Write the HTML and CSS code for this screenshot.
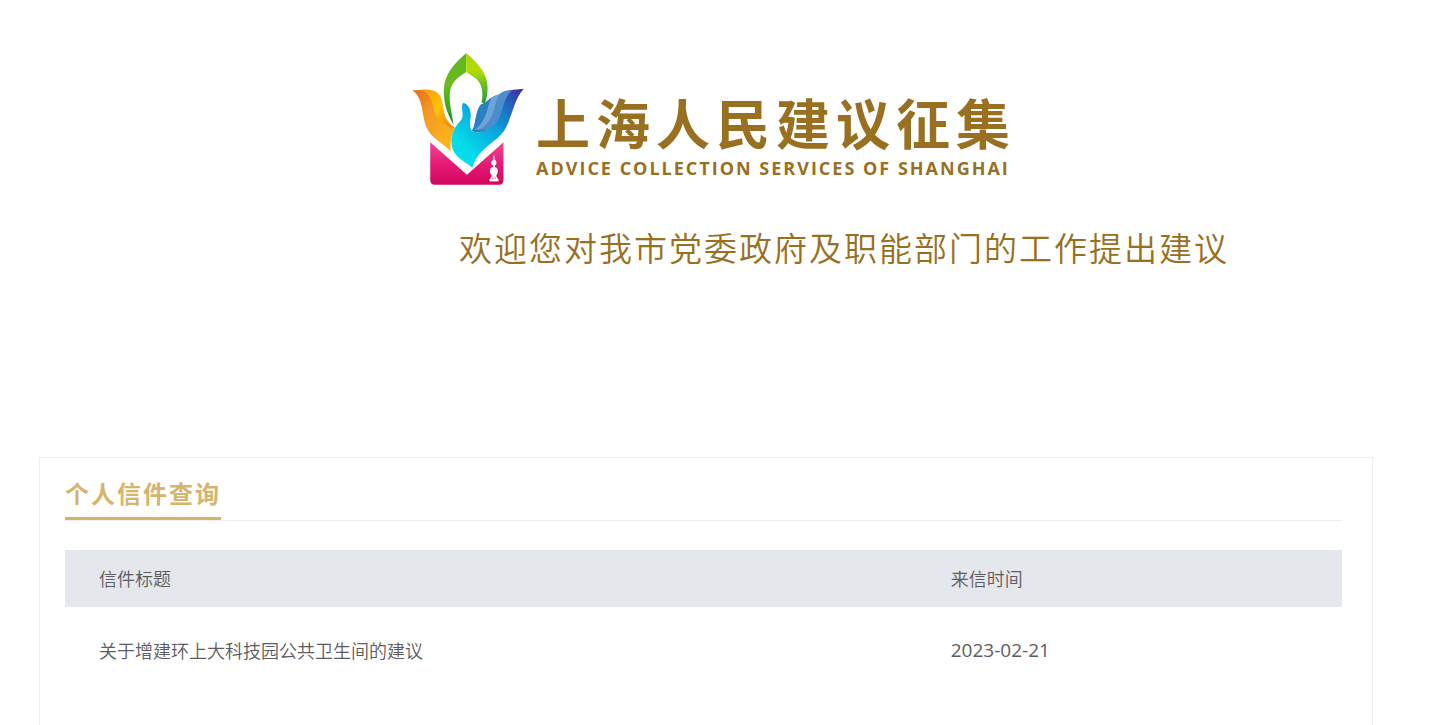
FILE: index.html
```html
<!DOCTYPE html>
<html lang="zh-CN">
<head>
<meta charset="utf-8">
<meta name="viewport" content="width=device-width, initial-scale=1">
<title>上海人民建议征集</title>
<link rel="stylesheet" href="styles.css">
</head>
<body>
<header class="banner">
  <div class="brand">
    <svg class="brand-logo" viewBox="36 38 338 398" preserveAspectRatio="none" aria-hidden="true">
      <defs>
        <linearGradient id="leaf" x1="0" y1="0" x2="0" y2="1"><stop offset="0" stop-color="#5fb421"/><stop offset=".45" stop-color="#6bbb1c"/><stop offset="1" stop-color="#159535"/></linearGradient>
        <linearGradient id="leafLight" x1="0" y1="0" x2="0" y2="1"><stop offset="0" stop-color="#a9d400"/><stop offset=".35" stop-color="#b4dc00"/><stop offset=".65" stop-color="#61bd22"/><stop offset="1" stop-color="#23983b"/></linearGradient>
        <linearGradient id="orange" x1="0" y1="0" x2=".8" y2="1"><stop offset="0" stop-color="#e66a15"/><stop offset=".4" stop-color="#f49a24"/><stop offset="1" stop-color="#ffb51b"/></linearGradient>
        <linearGradient id="yellow" x1="0" y1="0" x2="1" y2="1"><stop offset="0" stop-color="#f49a12"/><stop offset=".5" stop-color="#ffc400"/><stop offset="1" stop-color="#ee7610"/></linearGradient>
        <linearGradient id="hand" x1="1" y1="0" x2=".25" y2=".8"><stop offset="0" stop-color="#48279b"/><stop offset=".28" stop-color="#2069c0"/><stop offset=".62" stop-color="#08a9df"/><stop offset="1" stop-color="#04dcea"/></linearGradient>
        <linearGradient id="finger" x1="1" y1="0" x2="0" y2="1"><stop offset="0" stop-color="#345cae"/><stop offset=".5" stop-color="#71a9dc"/><stop offset="1" stop-color="#2376bd"/></linearGradient>
        <linearGradient id="envelope" x1="0" y1="0" x2="0" y2="1"><stop offset="0" stop-color="#ef4a94"/><stop offset=".5" stop-color="#e51b77"/><stop offset="1" stop-color="#d3065e"/></linearGradient>
      </defs>
      <path fill="url(#envelope)" d="M91 307L202 405L312 307V420Q312 435 298 435H105Q91 435 91 420Z"/>
      <path fill="url(#leaf)" d="M200 38C163 70 133 103 132 150C131 190 144 225 162 255C154 204 139 156 162 126C172 112 188 103 200 95Z"/>
      <path fill="url(#leafLight)" d="M200 38C239 73 267 103 264 151C263 168 259 183 255 192L246 187C252 158 247 133 232 117C222 108 209 103 200 95Z"/>
      <path fill="url(#orange)" d="M37 150C62 151 94 146 112 158C132 173 126 207 138 235C145 253 157 259 166 264C153 285 151 306 153 334C125 306 92 293 79 260C65 223 70 171 37 150Z"/>
      <path fill="url(#yellow)" d="M64 149C89 145 113 151 122 171C131 193 128 225 145 244C151 254 158 259 166 264C128 259 106 235 101 204C97 180 87 159 64 149Z"/>
      <path fill="url(#finger)" d="M244 193C257 190 265 179 276 172C286 165 295 166 303 160C314 151 327 150 342 151L325 251C287 276 245 283 216 274C230 257 226 211 244 193Z"/>
      <path fill="url(#hand)" d="M190 189C204 189 216 211 213 232C210 250 211 268 218 275C258 286 293 257 299 225C304 187 316 151 342 149C354 148 363 147 373 146C341 184 340 228 315 271C291 308 237 323 218 384C205 370 169 358 158 326C147 291 165 260 181 244C198 225 180 204 190 189Z"/>
      <path fill="#2d7fc4" d="M244 193C257 190 265 179 276 172C262 204 263 242 224 271L216 274C230 257 226 211 244 193Z"/>
      <path fill="#6ba6d8" d="M276 172C286 165 295 166 303 160C281 190 286 243 243 267L224 271C263 242 262 204 276 172Z"/>
      <path fill="#4f8ccb" d="M303 160C314 151 325 150 338 150C302 180 316 240 272 262Q256 269 243 267C286 243 281 190 303 160Z"/>
      <g fill="#fff">
        <path d="M282 347H285V365H282ZM279 360H288V365H279ZM281 373H286V389H281ZM273 401H294L290 408L297 421H290L286 411V425H281V411L277 421H270L277 408Z"/>
        <circle cx="283" cy="369" r="8"/><circle cx="283" cy="394" r="12"/>
        <path d="M270 418H297V425H270Z"/>
      </g>
    </svg>
    <div class="brand-text">
      <h1 class="brand-name">上海人民建议征集</h1>
      <p class="brand-english">ADVICE COLLECTION SERVICES OF SHANGHAI</p>
    </div>
  </div>
  <p class="welcome">欢迎您对我市党委政府及职能部门的工作提出建议</p>
</header>
<main class="panel">
  <div class="panel-head"><h2 class="panel-title">个人信件查询</h2></div>
  <table class="letters">
    <thead><tr><th class="col-title" scope="col">信件标题</th><th scope="col">来信时间</th></tr></thead>
    <tbody><tr><td>关于增建环上大科技园公共卫生间的建议</td><td class="date">2023-02-21</td></tr></tbody>
  </table>
</main>
</body>
</html>
```

FILE: styles.css
```css
* { box-sizing: border-box; }

body {
  margin: 0;
  min-height: 100vh;
  display: flex;
  flex-direction: column;
  background: #fff;
  color: #5c5c60;
  font-family: "Noto Sans CJK SC", sans-serif;
}

h1, h2, p { margin: 0; }

.banner {
  display: flex;
  flex-direction: column;
  align-items: center;
  padding: 53px 0 186px;
  color: #98701f;
}

.brand {
  display: flex;
  align-items: flex-end;
  gap: 12px;
  margin-right: 4px;
}

.brand-logo {
  width: 112px;
  height: 132px;
}

.brand-text { padding-bottom: 6px; }

.brand-name {
  font-size: 54px;
  font-weight: 700;
  line-height: 70px;
  letter-spacing: 6px;
}

.brand-english {
  font: 700 18px/22px "Open Sans", sans-serif;
  letter-spacing: 2px;
}

.welcome {
  margin-top: 38px;
  padding-left: 256px;
  font-size: 33px;
  font-weight: 350;
  line-height: 48px;
  letter-spacing: 2px;
}

.panel {
  flex: 1;
  margin: 0 59px 0 39px;
  padding: 15px 30px 24px 25px;
  border: 1px solid #eee;
  border-bottom: 0;
}

.panel-head {
  display: flex;
  border-bottom: 1px solid #eee;
}

.panel-title {
  padding-bottom: 5px;
  border-bottom: 3px solid #d3b26a;
  color: #d5b46c;
  font-size: 24px;
  font-weight: 700;
  line-height: 39px;
  letter-spacing: 2px;
}

.letters {
  width: 100%;
  margin-top: 29px;
  border-collapse: collapse;
  table-layout: fixed;
  font-size: 18px;
  line-height: 27px;
}

.letters th,
.letters td {
  padding: 15px 34px;
  text-align: left;
  font-weight: 350;
}

.letters th { background: #e4e7ec; }

.letters td { padding: 30px 34px; }

.letters .col-title { width: 66.7%; }

.letters .date {
  font-family: "Open Sans", sans-serif;
  font-size: 19px;
  font-weight: 400;
}
```
